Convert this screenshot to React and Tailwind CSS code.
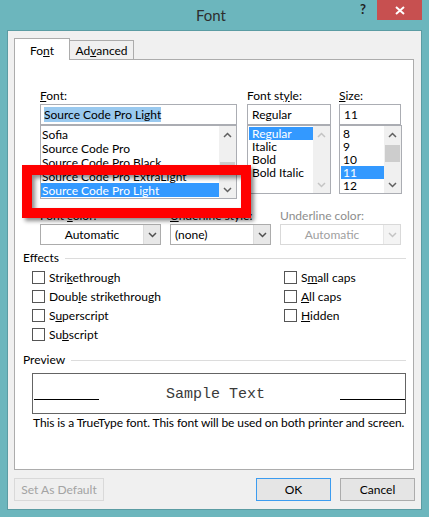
import React from "react";

const FONT_NAMES = [
  "Sofia",
  "Source Code Pro",
  "Source Code Pro Black",
  "Source Code Pro ExtraLight",
  "Source Code Pro Light",
];
const STYLES = ["Regular", "Italic", "Bold", "Bold Italic"];
const SIZES = ["8", "9", "10", "11", "12"];

function Chevron({ up, color = "#606060" }) {
  return (
    <svg width="9" height="6" viewBox="0 0 9 6">
      <path
        d={up ? "M1 5L4.5 1.5L8 5" : "M1 1L4.5 4.5L8 1"}
        fill="none"
        stroke={color}
        strokeWidth="1.5"
      />
    </svg>
  );
}

function ScrollBar({ thumbTop, thumbH, disabled }) {
  const c = disabled ? "#c4c4c4" : "#606060";
  return (
    <div className="w-[17px] h-full bg-[#f0f0f0] flex flex-col">
      <div className="h-[17px] flex items-center justify-center">
        <Chevron up color={c} />
      </div>
      <div className="flex-1 relative">
        {thumbH ? (
          <div
            className="absolute left-[1px] right-[1px] bg-[#cdcdcd]"
            style={{ top: thumbTop, height: thumbH }}
          />
        ) : null}
      </div>
      <div className="h-[17px] flex items-center justify-center">
        <Chevron color={c} />
      </div>
    </div>
  );
}

function Label({ children, muted }) {
  return (
    <div className={muted ? "h-[16px] text-[#8d8d8d]" : "h-[16px]"}>{children}</div>
  );
}

function Combo({ value, center, disabled, w }) {
  return (
    <div
      className={
        "h-[21px] flex border bg-white " +
        (disabled ? "border-[#d9d9d9] text-[#a0a0a0]" : "border-[#acacac]") +
        " " +
        w
      }
    >
      <div className={"flex-1 leading-[19px] " + (center ? "text-center" : "pl-[4px]")}>
        {value}
      </div>
      <div
        className={
          "w-[17px] flex items-center justify-center border-l " +
          (disabled ? "border-[#e6e6e6] bg-[#f4f4f4]" : "border-[#dcdcdc] bg-[#e8e8e8]")
        }
      >
        <Chevron color={disabled ? "#c4c4c4" : "#505050"} />
      </div>
    </div>
  );
}

function Check({ children }) {
  return (
    <div className="h-[19px] flex items-center gap-[4px]">
      <div className="w-[13px] h-[13px] border border-[#555] bg-white" />
      <span>{children}</span>
    </div>
  );
}

function GroupTitle({ children }) {
  return (
    <div className="h-[16px] flex items-center gap-[6px] ml-[8px] mr-[7px]">
      <span>{children}</span>
      <div className="flex-1 h-px bg-[#dcdcdc]" />
    </div>
  );
}

export default function App() {
  return (
    <div className="w-[429px] h-[517px] bg-[#6cb6bd] flex flex-col font-['Lato',sans-serif] text-[12px] leading-[16px] text-black select-none">
      {/* title bar */}
      <div className="h-[30px] flex items-start">
        <div className="flex-1" />
        <div className="pt-[5px] text-[15px] leading-[20px] text-[#2e2e2e]">Font</div>
        <div className="flex-1 flex justify-end pr-[7px]">
          <span className="mt-[1px] mr-[11px] text-[13px] font-bold text-[#222]">?</span>
          <div className="w-[45px] h-[20px] bg-[#c75050] flex items-center justify-center">
            <svg width="10" height="9" viewBox="0 0 10 9">
              <path d="M1 1L9 8M9 1L1 8" stroke="#fff" strokeWidth="2" />
            </svg>
          </div>
        </div>
      </div>

      {/* dialog body */}
      <div className="mx-[7px] h-[480px] border border-[#5b9ca3] bg-[#f0f0f0] flex flex-col pt-[7px] pl-[6px]">
        {/* tabs */}
        <div className="h-[21px] flex items-end">
          <div className="relative z-10 -mb-px w-[56px] h-[22px] border border-b-0 border-[#acacac] bg-white text-center pt-[4px]">
            Fo<u>n</u>t
          </div>
          <div className="w-[64px] h-[19px] border-t border-r border-[#acacac] bg-[#f0f0f0] text-center pt-[2px]">
            Ad<u>v</u>anced
          </div>
        </div>

        {/* tab panel */}
        <div className="relative w-[400px] h-[411px] border border-[#acacac] bg-white flex flex-col">
          {/* font / style / size */}
          <div className="flex pt-[28px] pl-[25px]">
            <div className="w-[197px]">
              <Label>
                <u>F</u>ont:
              </Label>
              <div className="h-[21px] border border-[#abadb3] pl-[3px] pt-[2px]">
                <span className="bg-[#99c9ef] leading-[15px] inline-block">Source Code Pro Light</span>
              </div>
              <div className="h-[74px] border border-[#abadb3] flex">
                <div className="flex-1 pt-[1px]">
                  {FONT_NAMES.map((f) => (
                    <div
                      key={f}
                      className={
                        "h-[14px] leading-[15px] pl-[1px] whitespace-nowrap overflow-hidden " +
                        (f === "Source Code Pro Light" ? "bg-[#3399ff] text-white" : "")
                      }
                    >
                      {f}
                    </div>
                  ))}
                </div>
                <ScrollBar thumbTop={19} thumbH={13} />
              </div>
            </div>

            <div className="w-[84px] ml-[10px]">
              <Label>
                Font st<u>y</u>le:
              </Label>
              <div className="h-[21px] border border-[#abadb3] pl-[4px] leading-[19px]">Regular</div>
              <div className="h-[69px] border border-[#abadb3] flex">
                <div className="flex-1 pt-[1px] pl-[1px]">
                  {STYLES.map((s) => (
                    <div
                      key={s}
                      className={
                        "h-[13px] leading-[13px] pl-[3px] " +
                        (s === "Regular" ? "bg-[#3399ff] text-white" : "")
                      }
                    >
                      {s}
                    </div>
                  ))}
                </div>
                <ScrollBar disabled />
              </div>
            </div>

            <div className="w-[63px] ml-[8px]">
              <Label>
                <u>S</u>ize:
              </Label>
              <div className="h-[21px] w-[62px] border border-[#abadb3] pl-[4px] leading-[19px]">11</div>
              <div className="h-[69px] border border-[#abadb3] flex">
                <div className="flex-1 pt-[1px] pl-[1px]">
                  {SIZES.map((s) => (
                    <div
                      key={s}
                      className={
                        "h-[13px] leading-[13px] pl-[2px] " +
                        (s === "11" ? "bg-[#3399ff] text-white" : "")
                      }
                    >
                      {s}
                    </div>
                  ))}
                </div>
                <ScrollBar thumbTop={2} thumbH={17} />
              </div>
            </div>
          </div>

          {/* color / underline */}
          <div className="flex mt-[9px] pl-[25px]">
            <div className="w-[121px]">
              <Label>
                Font <u>c</u>olor:
              </Label>
              <Combo value="Automatic" center w="w-[121px]" />
            </div>
            <div className="w-[101px] ml-[9px]">
              <Label>
                <u>U</u>nderline style:
              </Label>
              <Combo value="(none)" w="w-[101px]" />
            </div>
            <div className="w-[121px] ml-[9px]">
              <Label muted>Underline color:</Label>
              <Combo value="Automatic" center disabled w="w-[121px]" />
            </div>
          </div>

          {/* effects */}
          <div className="mt-[5px]">
            <GroupTitle>Effects</GroupTitle>
            <div className="flex mt-[2px] ml-[17px]">
              <div className="w-[252px]">
                <Check>
                  Stri<u>k</u>ethrough
                </Check>
                <Check>
                  Doub<u>l</u>e strikethrough
                </Check>
                <Check>
                  S<u>u</u>perscript
                </Check>
                <Check>
                  Su<u>b</u>script
                </Check>
              </div>
              <div>
                <Check>
                  S<u>m</u>all caps
                </Check>
                <Check>
                  <u>A</u>ll caps
                </Check>
                <Check>
                  <u>H</u>idden
                </Check>
              </div>
            </div>
          </div>

          {/* preview */}
          <div className="mt-[8px]">
            <GroupTitle>Preview</GroupTitle>
            <div className="mt-[5px] ml-[17px] w-[374px] h-[41px] border border-[#646464] flex items-start">
              <div className="w-[65px] h-px bg-black mt-[25px] ml-px" />
              <div className="flex-1 text-center mt-[11px] pr-[8px] font-['Liberation_Mono',monospace] text-[15px] leading-[20px] text-[#3a3a3a]">
                Sample Text
              </div>
              <div className="w-[65px] h-px bg-black mt-[25px]" />
            </div>
            <div className="ml-[18px] mt-px tracking-[-0.1px]">
              This is a TrueType font. This font will be used on both printer and screen.
            </div>
          </div>

          {/* annotation box */}
          <div className="absolute left-[7px] top-[105px] w-[229px] h-[53px] border-[10px] border-[#ff0000] shadow-[3px_3px_4px_rgba(0,0,0,0.45),inset_3px_3px_4px_rgba(0,0,0,0.45)]" />
        </div>

        {/* buttons */}
        <div className="flex mt-[8px] pr-[6px]">
          <div className="w-[90px] h-[23px] border border-[#d9d9d9] bg-[#efefef] text-[#a3a3a3] text-center leading-[21px]">
            Set As Default
          </div>
          <div className="flex-1" />
          <div className="w-[75px] h-[23px] border border-[#3c9cf0] bg-[#e5e5e5] text-center leading-[21px]">
            OK
          </div>
          <div className="w-[75px] h-[23px] ml-[9px] border border-[#acacac] bg-[#e5e5e5] text-center leading-[21px]">
            Cancel
          </div>
        </div>
      </div>
    </div>
  );
}
